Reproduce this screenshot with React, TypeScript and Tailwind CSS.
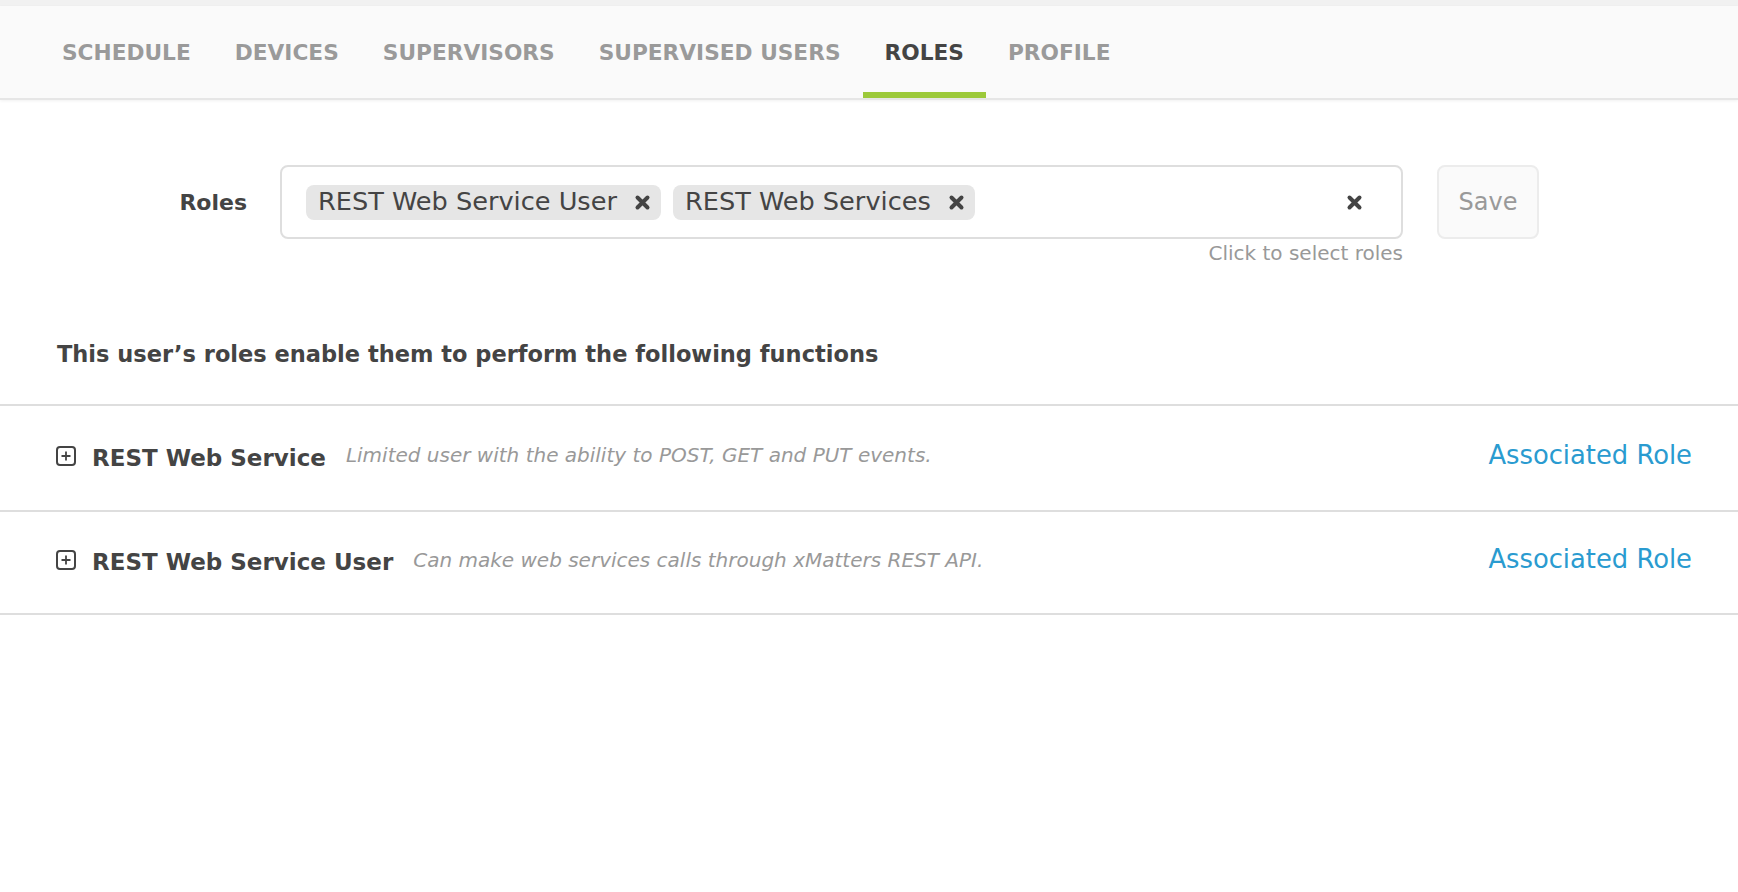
import React from "react"

const tabs = ["SCHEDULE", "DEVICES", "SUPERVISORS", "SUPERVISED USERS", "ROLES", "PROFILE"]

const selectedRoles = ["REST Web Service User", "REST Web Services"]

const functions = [
  { name: "REST Web Service", desc: "Limited user with the ability to POST, GET and PUT events." },
  { name: "REST Web Service User", desc: "Can make web services calls through xMatters REST API." },
]

// grosso "x" usado nos chips e no botão de limpar
function HeavyX({ className = "" }: { className?: string }) {
  return (
    <svg viewBox="0 0 17 17" className={className} fill="none">
      <path d="M3.5 3.5 L13.5 13.5 M13.5 3.5 L3.5 13.5" stroke="#444" strokeWidth="4" strokeLinecap="round" />
    </svg>
  )
}

function PlusBox() {
  return (
    <svg viewBox="0 0 20 20" className="w-[20px] h-[20px] shrink-0 mb-[5px]" fill="none">
      <rect x="1" y="1" width="18" height="18" rx="3" stroke="#444" strokeWidth="2" />
      <path d="M10 5.5 V14.5 M5.5 10 H14.5" stroke="#444" strokeWidth="1.8" />
    </svg>
  )
}

export default function App() {
  return (
    <div className="min-h-screen bg-white font-['DejaVu_Sans',sans-serif] text-[#444]">
      <div className="h-[6px] bg-[#f1f1f1]" />

      {/* Abas */}
      <nav className="h-[94px] bg-[#fafafa] border-b-2 border-[#e6e6e6] shadow-[0_1px_3px_rgba(0,0,0,0.06)] flex pl-[40px]">
        {tabs.map((tab) => {
          const active = tab === "ROLES"
          return (
            <div key={tab} className="relative h-full flex items-center px-[22px] pt-[2px]">
              <span className={`text-[21.7px] font-bold ${active ? "text-[#444]" : "text-[#9a9a9a]"}`}>{tab}</span>
              {active && <div className="absolute left-0 right-0 bottom-0 h-[6px] bg-[#9cc93a]" />}
            </div>
          )
        })}
      </nav>

      {/* Seleção de papéis */}
      <div className="flex items-start mt-[65px]">
        <div className="w-[247px] h-[74px] flex items-center justify-end">
          <span className="text-[22px] font-bold">Roles</span>
        </div>
        <div className="ml-[33px] w-[1123px]">
          <div className="h-[74px] border-2 border-[#dedede] rounded-[8px] flex items-center pl-[24px] pr-[38px]">
            <div className="flex-1 flex items-center gap-[12px]">
              {selectedRoles.map((role) => (
                <div key={role} className="h-[35px] bg-[#e6e6e6] rounded-[8px] flex items-center pl-[12px] pr-[10px]">
                  <span className="text-[25.6px] leading-none">{role}</span>
                  <HeavyX className="w-[17px] h-[17px] ml-[17px]" />
                </div>
              ))}
            </div>
            <HeavyX className="w-[17px] h-[17px]" />
          </div>
          <p className="mt-[2px] text-right text-[20px] leading-[24px] text-[#999]">Click to select roles</p>
        </div>
        <button className="ml-[34px] w-[102px] h-[74px] border-2 border-[#ececec] bg-[#fafafa] rounded-[8px] text-[24px] text-[#999]">
          Save
        </button>
      </div>

      <h2 className="mt-[74px] px-[57px] text-[22.5px] leading-[30px] font-bold">
        This user’s roles enable them to perform the following functions
      </h2>

      {/* Lista de funções */}
      <div className="mt-[35px] border-t-2 border-[#dedede]">
        {functions.map((f, i) => (
          <div
            key={f.name}
            className={`${i === 0 ? "h-[106px]" : "h-[103px]"} border-b-2 border-[#dedede] flex items-center pl-[56px] pr-[46px]`}
          >
            <PlusBox />
            <span className="ml-[16px] text-[23px] font-bold">{f.name}</span>
            <span className="ml-[20px] mb-[6px] text-[20px] italic text-[#999]">{f.desc}</span>
            <a className="ml-auto mb-[6px] text-[25.8px] text-[#2a9bd0]">Associated Role</a>
          </div>
        ))}
      </div>
    </div>
  )
}
